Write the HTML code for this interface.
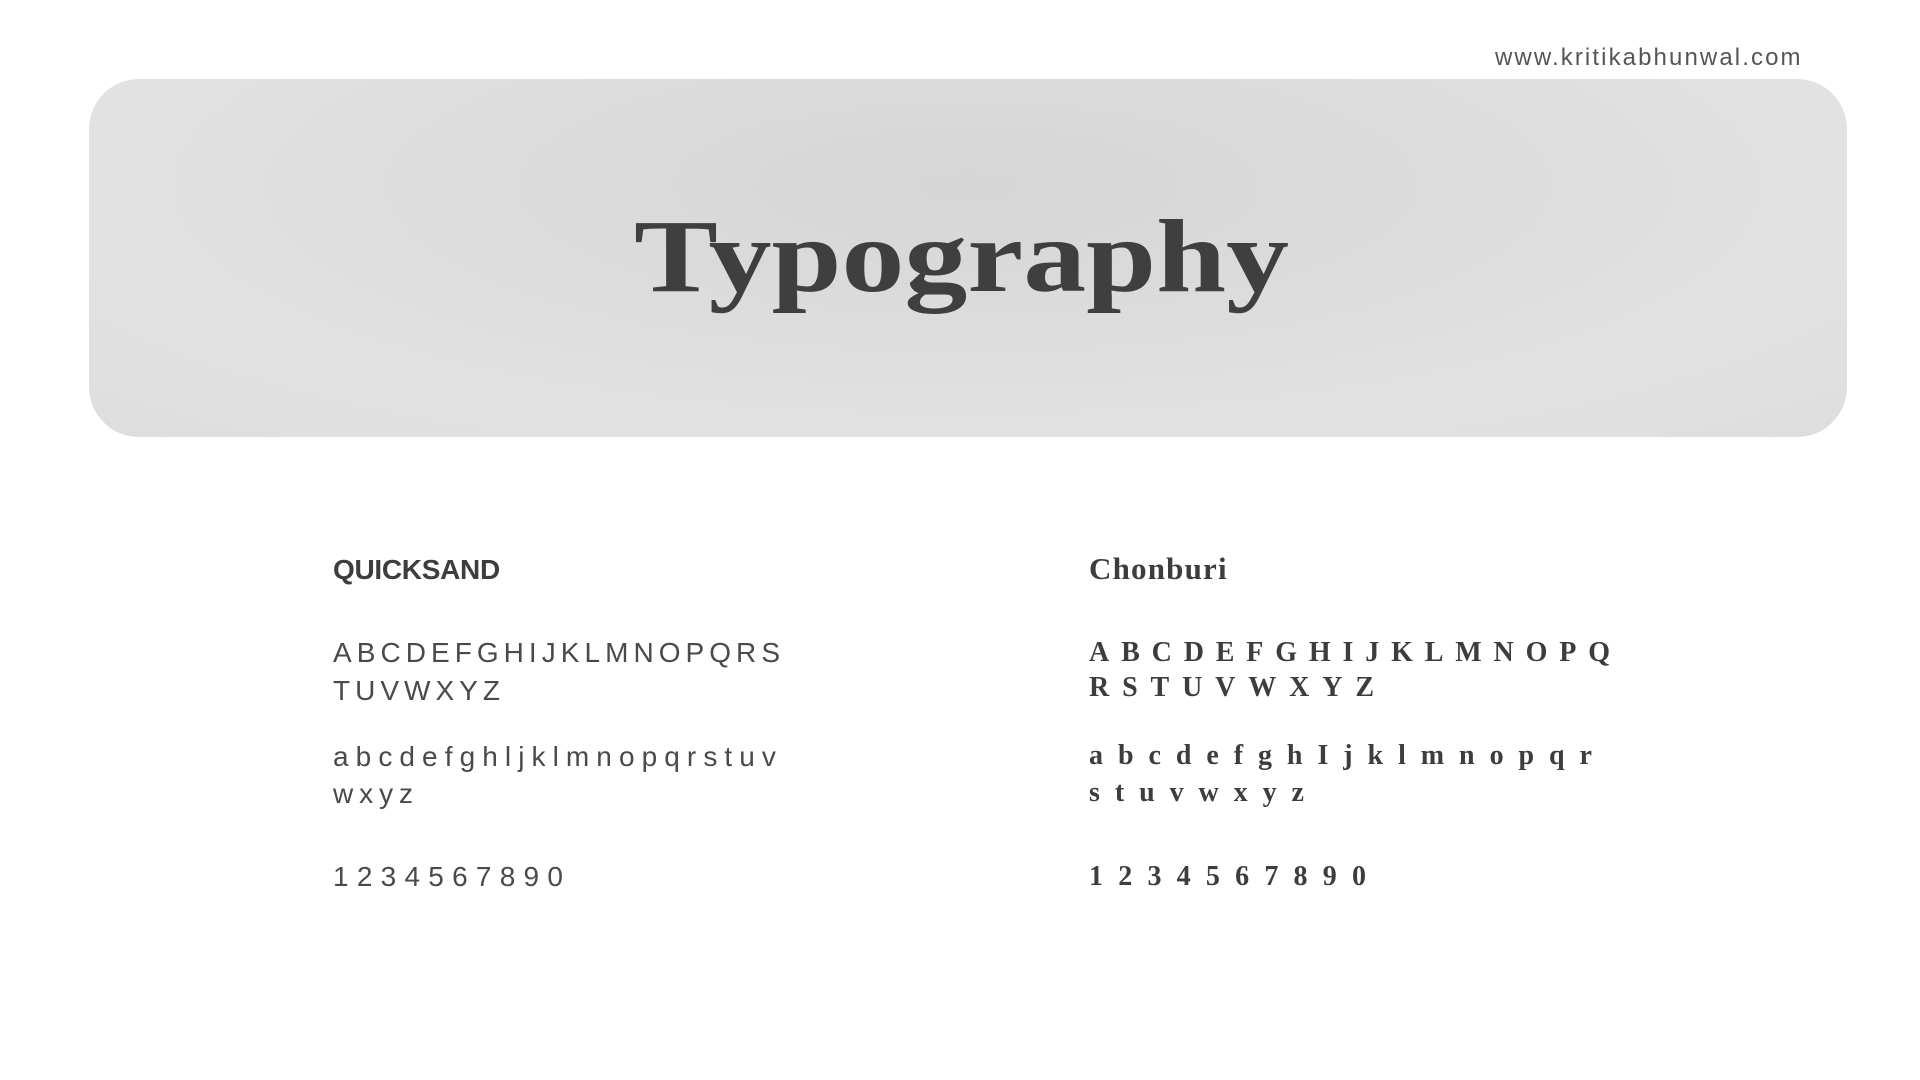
<!DOCTYPE html>
<html><head><meta charset="utf-8"><style>
*{margin:0;padding:0;box-sizing:border-box}
body{width:1920px;height:1080px;background:#fff;position:relative;overflow:hidden;font-family:"Liberation Sans",sans-serif;color:#3d3d3d}
.url{position:absolute;left:1495px;top:44px;font-size:24px;color:#555;letter-spacing:2.1px;white-space:nowrap}
.banner{position:absolute;left:89px;top:79px;width:1758px;height:358px;border-radius:50px;
background:radial-gradient(ellipse at 50% 30%,#d6d6d6 0%,#dcdcdc 40%,#e2e2e2 70%,#dedede 100%)}
.title{position:absolute;left:634px;top:192px;font-family:"Liberation Serif",serif;font-weight:bold;font-size:104px;line-height:130px;color:#3f3f3f;white-space:nowrap;transform-origin:0 0;transform:scaleX(1.21)}
.h{position:absolute;font-size:28px;font-weight:bold;white-space:nowrap;line-height:32px}
.row{position:absolute;display:flex;justify-content:space-between;font-size:28px;line-height:32px;height:32px}
.q{font-family:"Liberation Sans",sans-serif;font-weight:normal;color:#4a4a4a}
.c{font-family:"Liberation Serif",serif;font-weight:bold;color:#3d3d3d}
</style></head><body>
<div class="url">www.kritikabhunwal.com</div>
<div class="banner"></div>
<div class="title">Typography</div>

<div class="h" style="left:333px;top:554px;letter-spacing:-0.3px">QUICKSAND</div>
<div class="row q" style="left:333px;top:637px;width:447px"><span>A</span><span>B</span><span>C</span><span>D</span><span>E</span><span>F</span><span>G</span><span>H</span><span>I</span><span>J</span><span>K</span><span>L</span><span>M</span><span>N</span><span>O</span><span>P</span><span>Q</span><span>R</span><span>S</span></div>
<div class="row q" style="left:333px;top:675px;width:167px"><span>T</span><span>U</span><span>V</span><span>W</span><span>X</span><span>Y</span><span>Z</span></div>
<div class="row q" style="left:333px;top:741px;width:443px"><span>a</span><span>b</span><span>c</span><span>d</span><span>e</span><span>f</span><span>g</span><span>h</span><span>l</span><span>j</span><span>k</span><span>l</span><span>m</span><span>n</span><span>o</span><span>p</span><span>q</span><span>r</span><span>s</span><span>t</span><span>u</span><span>v</span></div>
<div class="row q" style="left:333px;top:778px;width:80px"><span>w</span><span>x</span><span>y</span><span>z</span></div>
<div class="row q" style="left:333px;top:861px;width:230px"><span>1</span><span>2</span><span>3</span><span>4</span><span>5</span><span>6</span><span>7</span><span>8</span><span>9</span><span>0</span></div>

<div class="h c" style="left:1089px;top:553px;font-size:31px;letter-spacing:1.2px">Chonburi</div>
<div class="row c" style="left:1089px;top:637px;width:521px"><span>A</span><span>B</span><span>C</span><span>D</span><span>E</span><span>F</span><span>G</span><span>H</span><span>I</span><span>J</span><span>K</span><span>L</span><span>M</span><span>N</span><span>O</span><span>P</span><span>Q</span></div>
<div class="row c" style="left:1089px;top:672px;width:285px"><span>R</span><span>S</span><span>T</span><span>U</span><span>V</span><span>W</span><span>X</span><span>Y</span><span>Z</span></div>
<div class="row c" style="left:1089px;top:740px;width:503px"><span>a</span><span>b</span><span>c</span><span>d</span><span>e</span><span>f</span><span>g</span><span>h</span><span>I</span><span>j</span><span>k</span><span>l</span><span>m</span><span>n</span><span>o</span><span>p</span><span>q</span><span>r</span></div>
<div class="row c" style="left:1089px;top:777px;width:215px"><span>s</span><span>t</span><span>u</span><span>v</span><span>w</span><span>x</span><span>y</span><span>z</span></div>
<div class="row c" style="left:1089px;top:861px;width:277px"><span>1</span><span>2</span><span>3</span><span>4</span><span>5</span><span>6</span><span>7</span><span>8</span><span>9</span><span>0</span></div>
</body></html>
